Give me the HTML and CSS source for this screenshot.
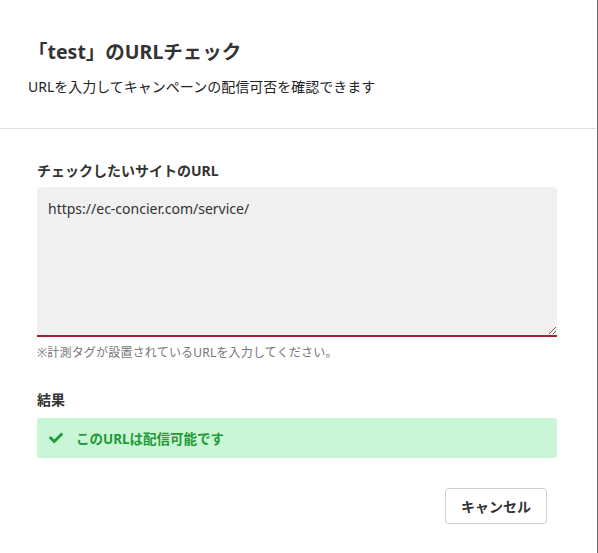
FILE: index.html
```html
<!DOCTYPE html>
<html lang="ja">
<head>
<meta charset="utf-8">
<title>URLチェック</title>
<link rel="stylesheet" href="styles.css">
</head>
<body>
<div class="modal">
  <div class="modal-header">
    <h1 class="modal-title">「test」のURLチェック</h1>
    <p class="modal-subtitle">URLを入力してキャンペーンの配信可否を確認できます</p>
  </div>
  <div class="modal-body">
    <label class="field-label" for="url">チェックしたいサイトのURL</label>
    <textarea id="url" class="url-input">https://ec-concier.com/service/</textarea>
    <p class="help-text">※計測タグが設置されているURLを入力してください。</p>
    <div class="result-label">結果</div>
    <div class="result-box">
      <svg class="check-icon" viewBox="0 0 512 512" aria-hidden="true"><path d="M173.898 439.404l-166.4-166.4c-9.997-9.997-9.997-26.206 0-36.204l36.203-36.204c9.997-9.998 26.207-9.998 36.204 0L192 312.69 432.095 72.596c9.997-9.997 26.207-9.997 36.204 0l36.203 36.204c9.997 9.997 9.997 26.206 0 36.204l-294.4 294.401c-9.998 9.997-26.207 9.997-36.204-.001z"/></svg>
      <span class="result-text">このURLは配信可能です</span>
    </div>
    <div class="modal-footer">
      <button class="btn-cancel" type="button">キャンセル</button>
    </div>
  </div>
</div>
</body>
</html>
```

FILE: styles.css
```css
* { box-sizing: border-box; }
html, body { margin: 0; padding: 0; background: #fff; }
body {
  font-family: "Noto Sans", "Noto Sans CJK JP", sans-serif;
  color: #333;
}
.modal {
  width: 598px;
  height: 553px;
  border-right: 1px solid #707070;
  padding-right: 1px;
}
.modal-header {
  padding: 38px 0 31px 28px;
  border-bottom: 1px solid #dedede;
}
.modal-title {
  margin: 0;
  font-size: 19.5px;
  line-height: 28px;
  font-weight: 700;
  color: #333;
}
.modal-subtitle {
  margin: 11px 0 0;
  font-size: 14px;
  line-height: 20px;
  color: #222;
}
.modal-body {
  padding: 32px 0 0 37px;
  width: 557px;
  display: flex;
  flex-direction: column;
}
.field-label {
  font-size: 14px;
  line-height: 20px;
  font-weight: 700;
  color: #333;
}
.url-input {
  margin-top: 6px;
  width: 520px;
  height: 150px;
  border: none;
  border-bottom: 2px solid #a5222f;
  border-radius: 4px 4px 0 0;
  background: #f0f0f0;
  padding: 12px 11px;
  font-family: "Noto Sans", "Noto Sans CJK JP", sans-serif;
  font-size: 14px;
  line-height: 20px;
  color: #333;
  outline: none;
  display: block;
}
.help-text {
  margin: 7px 0 0;
  font-size: 12px;
  line-height: 18px;
  letter-spacing: 0.2px;
  color: #777;
}
.result-label {
  margin-top: 28px;
  font-size: 14px;
  line-height: 20px;
  font-weight: 700;
  color: #333;
}
.result-box {
  margin-top: 8px;
  height: 40px;
  background: #c9f6d6;
  border-radius: 3px;
  display: flex;
  align-items: center;
  padding-left: 12px;
  gap: 13px;
}
.check-icon {
  width: 14px;
  height: 14px;
  fill: #1f9a38;
}
.result-text {
  font-size: 13.5px;
  font-weight: 700;
  color: #1f9a38;
}
.modal-footer {
  margin-top: 30px;
  display: flex;
  justify-content: flex-end;
  padding-right: 10px;
}
.btn-cancel {
  width: 102px;
  height: 36px;
  background: #fff;
  border: 1px solid #cfcfcf;
  border-radius: 4px;
  font-family: "Noto Sans", "Noto Sans CJK JP", sans-serif;
  font-size: 14px;
  font-weight: 700;
  color: #333;
  cursor: pointer;
}
```
